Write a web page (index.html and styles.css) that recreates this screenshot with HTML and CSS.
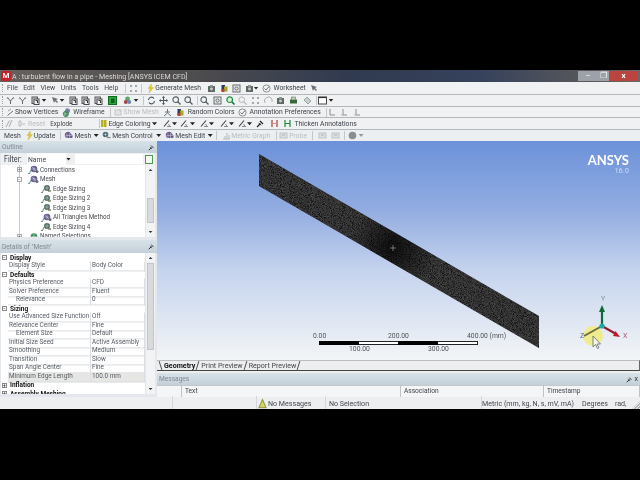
FILE: index.html
```html
<!DOCTYPE html>
<html lang="en">
<head>
<meta charset="utf-8">
<title>Meshing</title>
<link rel="stylesheet" href="styles.css">
</head>
<body>
<svg class="defs" aria-hidden="true">
  <symbol id="bolt" viewBox="0 0 9 9"><path d="M5.5 0L2 4.5h2.2L3 9l4.5-5.4H5z" fill="#e6c81e" stroke="#b8b040" stroke-width=".4"/></symbol>
  <symbol id="page" viewBox="0 0 9 9"><rect x="1" y="1" width="5.5" height="6.5" fill="#cfd2d2" stroke="#55595a"/><rect x="3" y="3" width="5" height="5.5" fill="#eee" stroke="#44484a"/><path d="M4.5 4.5h2v2.5" stroke="#333" fill="none"/></symbol>
  <symbol id="pagegreen" viewBox="0 0 9 9"><rect x=".5" y=".5" width="8" height="8" fill="#29a83c" stroke="#0e6a20"/><path d="M3 2.5h3.5v4.5H3z" fill="#0f5e1c"/></symbol>
  <symbol id="ypick" viewBox="0 0 9 9"><path d="M1.5 1.5L4.5 5l3-3.5M4.5 5v3" stroke="#666" fill="none"/><path d="M1 3l1-2M8 3L7 1" stroke="#999"/></symbol>
  <symbol id="sel" viewBox="0 0 9 9"><path d="M1 1l2 6 1-2 2 2 1-1-2-2 2-1z" fill="#6a7278"/></symbol>
  <symbol id="selgreen" viewBox="0 0 9 9"><circle cx="4.5" cy="3" r="2.4" fill="#58a868"/><circle cx="2.8" cy="6" r="2" fill="#a04848"/><circle cx="6.2" cy="6" r="2" fill="#6888b8"/></symbol>
  <symbol id="rot" viewBox="0 0 9 9"><path d="M1.5 4A3 3 0 0 1 7 2.5M7.5 5A3 3 0 0 1 2 6.5" stroke="#46505a" stroke-width="1.1" fill="none"/></symbol>
  <symbol id="pan" viewBox="0 0 9 9"><path d="M4.5 .5v8M.5 4.5h8" stroke="#50585e"/><path d="M4.5 0l-1.5 2h3zM4.5 9l-1.5-2h3zM0 4.5l2-1.5v3zM9 4.5l-2-1.5v3z" fill="#50585e"/></symbol>
  <symbol id="zoom" viewBox="0 0 9 9"><circle cx="3.7" cy="3.7" r="2.8" fill="#f0f2f2" stroke="#5a6268" stroke-width="1.1"/><path d="M5.8 5.8L8.5 8.5" stroke="#5a6268" stroke-width="1.4"/></symbol>
  <symbol id="zoomgreen" viewBox="0 0 9 9"><circle cx="3.7" cy="3.7" r="2.8" fill="#d8f0d8" stroke="#1a9040" stroke-width="1.2"/><path d="M5.8 5.8L8.5 8.5" stroke="#0e6a2c" stroke-width="1.5"/></symbol>
  <symbol id="zoompale" viewBox="0 0 9 9"><circle cx="3.7" cy="3.7" r="2.8" fill="none" stroke="#b0b8bc"/><path d="M5.8 5.8L8.5 8.5" stroke="#b0b8bc" stroke-width="1.2"/></symbol>
  <symbol id="box" viewBox="0 0 9 9"><rect x="1" y="1" width="7" height="7" fill="#e6e8e8" stroke="#666c70"/><circle cx="4.5" cy="4.5" r="1.6" fill="none" stroke="#666c70"/></symbol>
  <symbol id="dots" viewBox="0 0 9 9"><path d="M1 2h2M6 2h2M1 7h2M6 7h2M2 1v2M7 1v2M2 6v2M7 6v2" stroke="#8a9096"/></symbol>
  <symbol id="paleswirl" viewBox="0 0 9 9"><path d="M1 7A4 4 0 0 1 8 3M8 3v3" stroke="#a8b0b4" fill="none"/></symbol>
  <symbol id="cam" viewBox="0 0 9 9"><rect x="1" y="2" width="7" height="6" fill="#606a64"/><rect x="3" y="1" width="3" height="2" fill="#8a9490"/><circle cx="4.5" cy="5" r="1.4" fill="#c8d0cc"/></symbol>
  <symbol id="prn" viewBox="0 0 9 9"><rect x="1" y="3.5" width="7" height="4" fill="#386838"/><rect x="2.5" y="1" width="4" height="3" fill="#c0c8b8" stroke="#5a6a50" stroke-width=".5"/></symbol>
  <symbol id="tag" viewBox="0 0 9 9"><path d="M1 4l3-3 4 4-3 3z" fill="#c8d0cc" stroke="#9aa4a0"/></symbol>
  <symbol id="winbox" viewBox="0 0 9 9"><rect x=".5" y="1" width="8" height="7" fill="#fff" stroke="#444"/><path d="M.5 1.5h8" stroke="#333" stroke-width="1.2"/></symbol>
  <symbol id="triad1" viewBox="0 0 9 9"><path d="M2 1v6h5" stroke="#8a9298" fill="none"/><path d="M1 2h2M2 5l1 1" stroke="#b0b6ba"/></symbol>
  <symbol id="triad2" viewBox="0 0 9 9"><path d="M3 1v6h4" stroke="#8a9298" fill="none"/><path d="M1 7h2" stroke="#b0b6ba"/></symbol>
  <symbol id="vertices" viewBox="0 0 9 9"><path d="M1.5 7.5L7 3" stroke="#6c7276"/><path d="M2 3l3-2" stroke="#9aa0a4"/></symbol>
  <symbol id="wire" viewBox="0 0 9 9"><path d="M3 2.5A2.5 2.5 0 1 1 8 3 2.5 2.5 0 0 1 3 2.5z" fill="#7a7ea8"/><path d="M1 5a3 3 0 1 1 5 3 3 3 0 0 1-5-3z" fill="#3f8858"/><path d="M3 4v4M1.5 6h4" stroke="#d8e8d8" stroke-width=".5"/></symbol>
  <symbol id="palemesh" viewBox="0 0 9 9"><rect x="1" y="2" width="6" height="5" fill="#e2e4e6" stroke="#c4c8ca"/><path d="M5 1l3 3" stroke="#c4c8ca"/></symbol>
  <symbol id="person" viewBox="0 0 9 9"><path d="M4.5 1v4M1 8l3.5-3L8 8M2 4h5" stroke="#6a7a80" fill="none"/></symbol>
  <symbol id="random" viewBox="0 0 9 9"><rect x="1.5" y="1" width="3.5" height="6" fill="#2a3a70"/><rect x="4" y="2.5" width="3.5" height="5" fill="#a8a828"/><rect x="1.5" y="5" width="3" height="3" fill="#b04030"/></symbol>
  <symbol id="check" viewBox="0 0 9 9"><circle cx="4.5" cy="4.5" r="3.6" fill="#f2f4f4" stroke="#8a9094"/><path d="M2.5 4.5l1.5 1.5 3-3.5" stroke="#6a7074" fill="none"/></symbol>
  <symbol id="fan" viewBox="0 0 9 9"><path d="M7 1L4 8M4.5 1.5L1 8" stroke="#a8aeb2"/></symbol>
  <symbol id="pale2" viewBox="0 0 9 9"><path d="M2 2h2v5H2zM5 5h3" stroke="#b8bcc0" fill="none"/></symbol>
  <symbol id="yellowbars" viewBox="0 0 9 9"><path d="M1 1h2.5v7H1zM4 1h2.5v7H4z" fill="#b8b018"/></symbol>
  <symbol id="slash" viewBox="0 0 9 9"><path d="M1 7.5L6 1.5" stroke="#3c4248" stroke-width="1.1"/><path d="M4 7.5h4M5.5 5l1.5 2.5" stroke="#7a8086" stroke-width=".9" fill="none"/></symbol>
  <symbol id="pin" viewBox="0 0 9 9"><path d="M7.5 1L4.5 4.5 2 3.5l3.5 3.5-1-2.5z" fill="#222"/><path d="M1 8l3-3M4 2l3 3" stroke="#222" stroke-width="1.2"/></symbol>
  <symbol id="hred" viewBox="0 0 9 9"><path d="M2 1v7M7 1v7" stroke="#a83c3c" stroke-width="1.2"/><path d="M2 4.5h5" stroke="#c89090"/></symbol>
  <symbol id="hgreen" viewBox="0 0 9 9"><path d="M2 1v7M7 1v7" stroke="#1a8a38" stroke-width="1.2"/><path d="M2 4.5h5" stroke="#1a8a38"/></symbol>
  <symbol id="meshball" viewBox="0 0 9 9"><path d="M1 5a3 3 0 0 1 6-2 2.5 2.5 0 0 1 1 4H3a2.2 2.2 0 0 1-2-2z" fill="#6a5c88"/><path d="M3 2.5v4.5M5.5 2v5M1.5 4.5h6.5" stroke="#d8d4e4" stroke-width=".5"/></symbol>
  <symbol id="meshctl" viewBox="0 0 9 9"><circle cx="3.5" cy="3.5" r="2.8" fill="#4a6a70"/><path d="M1.5 3.5h4M3.5 1.5v4" stroke="#dde" stroke-width=".5"/><path d="M5 6.5h3.5" stroke="#7a8a78" stroke-width="1.3"/></symbol>
  <symbol id="metric" viewBox="0 0 9 9"><path d="M1 8h7M3 8V5M5 8V2M7 8V4" stroke="#b6bcc0"/></symbol>
  <symbol id="probe" viewBox="0 0 9 9"><rect x="1" y="2" width="7" height="5" fill="#dcdfe0" stroke="#c0c4c6"/><path d="M3 4h3" stroke="#b0b4b6"/></symbol>
  <symbol id="grayball" viewBox="0 0 9 9"><circle cx="4.5" cy="4.5" r="3.8" fill="#8a8e90"/></symbol>
  <symbol id="treeball" viewBox="0 0 11 9"><path d="M0 8l1.2 1L3 5" stroke="#4a7a8a" fill="none" stroke-width=".8"/><circle cx="6" cy="4" r="3.3" fill="#5e5c88"/><path d="M3.5 4h5M6 1.5v5M4 2l4 4" stroke="#e0e0ee" stroke-width=".5"/><circle cx="9" cy="6.5" r="1.5" fill="#6a6a7e"/></symbol>
  <symbol id="treeleaf" viewBox="0 0 11 9"><path d="M0 8l1.2 1L3 5" stroke="#3a7a3a" fill="none" stroke-width=".8"/><circle cx="6" cy="4" r="3" fill="#4e6a60"/><path d="M3.5 4h5M6 1.5v5" stroke="#d8e8e0" stroke-width=".5"/><path d="M7 7h3" stroke="#5a6a40" stroke-width="1.2"/></symbol>
  <symbol id="treegreen" viewBox="0 0 11 9"><circle cx="6" cy="4.5" r="3.3" fill="#3f9060"/><path d="M3.5 4.5h5M6 2v5" stroke="#e0f0e8" stroke-width=".5"/></symbol>
</svg>

<div class="band"></div>
<main class="window">
  <header class="titlebar">
    <span class="app-icon">M</span>
    <span class="title-text">A : turbulent flow in a pipe - Meshing [ANSYS ICEM CFD]</span>
    <span class="win-controls"><span class="win-btn min">–</span><span class="win-btn max">❐</span><span class="win-btn close">x</span></span>
  </header>

  <div class="bar bar-menu">
    <span class="grip"></span>
    <span class="menu first">File</span><span class="menu">Edit</span><span class="menu">View</span><span class="menu">Units</span><span class="menu">Tools</span><span class="menu">Help</span>
    <span class="sep m7"></span>
    <svg class="i m25"><use href="#dots"/></svg>
    <span class="sep m35"></span>
    <svg class="i m35"><use href="#bolt"/></svg>
    <span class="lb m05">Generate Mesh</span>
    <svg class="i m55"><use href="#cam"/></svg>
    <svg class="i m4"><use href="#random"/></svg>
    <svg class="i m3"><use href="#box"/></svg>
    <svg class="i m4"><use href="#cam"/></svg>
    <span class="arrow"></span>
    <svg class="i m3"><use href="#check"/></svg>
    <span class="lb m3">Worksheet</span>
    <svg class="i m45"><use href="#sel"/></svg>
  </div>

  <div class="bar">
    <span class="grip"></span>
    <svg class="i m15"><use href="#ypick"/></svg>
    <svg class="i m3"><use href="#ypick"/></svg>
    <svg class="i m4"><use href="#page"/></svg>
    <span class="arrow m2"></span>
    <svg class="i m4"><use href="#sel"/></svg>
    <span class="arrow"></span>
    <svg class="i m4"><use href="#page"/></svg>
    <svg class="i m3"><use href="#page"/></svg>
    <svg class="i m4"><use href="#page"/></svg>
    <svg class="i m5"><use href="#pagegreen"/></svg>
    <svg class="i m6"><use href="#selgreen"/></svg>
    <span class="arrow m2"></span>
    <span class="sep m45"></span>
    <svg class="i m25"><use href="#rot"/></svg>
    <svg class="i m3"><use href="#pan"/></svg>
    <svg class="i m4"><use href="#zoom"/></svg>
    <svg class="i m3"><use href="#zoom"/></svg>
    <span class="sep m45"></span>
    <svg class="i m15"><use href="#zoom"/></svg>
    <svg class="i m4"><use href="#box"/></svg>
    <svg class="i m4"><use href="#zoomgreen"/></svg>
    <svg class="i m3"><use href="#zoompale"/></svg>
    <svg class="i m4"><use href="#dots"/></svg>
    <svg class="i m4"><use href="#paleswirl"/></svg>
    <svg class="i m3"><use href="#cam"/></svg>
    <svg class="i m4"><use href="#prn"/></svg>
    <svg class="i m5"><use href="#tag"/></svg>
    <span class="sep m45"></span>
    <svg class="i m05"><use href="#winbox"/></svg>
    <span class="arrow m2"></span>
  </div>

  <div class="bar">
    <span class="grip"></span>
    <svg class="i m15"><use href="#vertices"/></svg>
    <span class="lb m05">Show Vertices</span>
    <svg class="i m35"><use href="#wire"/></svg>
    <span class="lb m25">Wireframe</span>
    <span class="sep m5"></span>
    <svg class="i m35"><use href="#palemesh"/></svg>
    <span class="lb off m05">Show Mesh</span>
    <svg class="i m45"><use href="#person"/></svg>
    <svg class="i m4"><use href="#random"/></svg>
    <span class="lb m25">Random Colors</span>
    <svg class="i m35"><use href="#check"/></svg>
    <span class="lb m25">Annotation Preferences</span>
    <span class="sep m5"></span>
    <svg class="i m15"><use href="#triad1"/></svg>
    <svg class="i m3"><use href="#triad2"/></svg>
    <svg class="i m4"><use href="#triad2"/></svg>
  </div>

  <div class="bar">
    <span class="grip"></span>
    <svg class="i m05"><use href="#fan"/></svg>
    <svg class="i m3"><use href="#pale2"/></svg>
    <span class="lb off m25">Reset</span>
    <span class="lb small m5">Explode</span>
    <span class="sep m27"></span>
    <svg class="i m0"><use href="#yellowbars"/></svg>
    <span class="lb mn1">Edge Coloring</span>
    <span class="arrow m15"></span>
    <svg class="i m6"><use href="#slash"/></svg>
    <span class="arrow"></span>
    <svg class="i m3"><use href="#slash"/></svg>
    <span class="arrow m1"></span>
    <svg class="i m5"><use href="#slash"/></svg>
    <span class="arrow"></span>
    <svg class="i m6"><use href="#slash"/></svg>
    <span class="arrow"></span>
    <svg class="i m4"><use href="#slash"/></svg>
    <span class="arrow"></span>
    <svg class="i m4"><use href="#pin"/></svg>
    <svg class="i m5"><use href="#hred"/></svg>
    <svg class="i m4"><use href="#hgreen"/></svg>
    <span class="lb m25">Thicken Annotations</span>
  </div>

  <div class="bar bar-last">
    <span class="lb m2">Mesh</span>
    <svg class="i m45"><use href="#bolt"/></svg>
    <span class="lb mn05">Update</span>
    <span class="sep m5"></span>
    <svg class="i m25"><use href="#meshball"/></svg>
    <span class="lb m15">Mesh</span>
    <span class="arrow m25"></span>
    <svg class="i m3"><use href="#meshctl"/></svg>
    <span class="lb m15">Mesh Control</span>
    <span class="arrow m35"></span>
    <svg class="i m4"><use href="#meshball"/></svg>
    <span class="lb m1">Mesh Edit</span>
    <span class="arrow m25"></span>
    <span class="sep m35"></span>
    <svg class="i m45"><use href="#metric"/></svg>
    <span class="lb off m05">Metric Graph</span>
    <span class="sep m6"></span>
    <svg class="i m15"><use href="#probe"/></svg>
    <span class="lb off m15">Probe</span>
    <span class="sep m5"></span>
    <svg class="i m45"><use href="#probe"/></svg>
    <svg class="i m4"><use href="#probe"/></svg>
    <span class="sep m45"></span>
    <svg class="i m3"><use href="#grayball"/></svg>
    <span class="arrow off-arrow m15"></span>
  </div>

  <div class="workspace">
    <aside class="side">
      <div class="pane-head"><span>Outline</span><svg class="pin"><use href="#pin"/></svg></div>
      <div class="outline">
        <div class="filter">
          <span class="filter-label">Filter:</span>
          <span class="filter-name">Name</span>
          <span class="arrow filter-arrow"></span>
          <span class="filter-input"></span>
          <span class="filter-btn"></span>
        </div>
        <div class="tree-wrap">
          <ul class="tree">
            <li class="l1"><span class="exp">+</span><svg class="ti"><use href="#treeball"/></svg><span class="tt">Connections</span></li>
            <li class="l1"><span class="exp">−</span><svg class="ti"><use href="#treeball"/></svg><span class="tt">Mesh</span></li>
            <li class="l2"><svg class="ti"><use href="#treeleaf"/></svg><span class="tt">Edge Sizing</span></li>
            <li class="l2"><svg class="ti"><use href="#treeleaf"/></svg><span class="tt">Edge Sizing 2</span></li>
            <li class="l2"><svg class="ti"><use href="#treeleaf"/></svg><span class="tt">Edge Sizing 3</span></li>
            <li class="l2"><svg class="ti"><use href="#treeball"/></svg><span class="tt">All Triangles Method</span></li>
            <li class="l2"><svg class="ti"><use href="#treeleaf"/></svg><span class="tt">Edge Sizing 4</span></li>
            <li class="l1"><span class="exp">+</span><svg class="ti"><use href="#treegreen"/></svg><span class="tt">Named Selections</span></li>
          </ul>
          <div class="scroll tree-scroll"><span class="thumb"></span></div>
        </div>
      </div>
      <div class="pane-head details-head"><span>Details of "Mesh"</span><svg class="pin"><use href="#pin"/></svg></div>
      <div class="details">
        <div class="grid">
          <div class="g-head"><span class="box">−</span><span class="gt">Display</span></div>
          <div class="g-row"><span>Display Style</span><span>Body Color</span></div>
          <div class="g-head"><span class="box">−</span><span class="gt">Defaults</span></div>
          <div class="g-row"><span>Physics Preference</span><span>CFD</span></div>
          <div class="g-row"><span>Solver Preference</span><span>Fluent</span></div>
          <div class="g-row"><span class="ind">Relevance</span><span>0</span></div>
          <div class="g-head"><span class="box">−</span><span class="gt">Sizing</span></div>
          <div class="g-row"><span>Use Advanced Size Function</span><span>Off</span></div>
          <div class="g-row"><span>Relevance Center</span><span>Fine</span></div>
          <div class="g-row"><span class="ind">Element Size</span><span>Default</span></div>
          <div class="g-row"><span>Initial Size Seed</span><span>Active Assembly</span></div>
          <div class="g-row"><span>Smoothing</span><span>Medium</span></div>
          <div class="g-row"><span>Transition</span><span>Slow</span></div>
          <div class="g-row"><span>Span Angle Center</span><span>Fine</span></div>
          <div class="g-row sel"><span>Minimum Edge Length</span><span>100.0 mm</span></div>
          <div class="g-head"><span class="box">+</span><span class="gt">Inflation</span></div>
          <div class="g-head"><span class="box">+</span><span class="gt">Assembly Meshing</span></div>
        </div>
        <div class="scroll details-scroll"><span class="thumb"></span></div>
      </div>
    </aside>

    <section class="main">
      <div class="viewport">
        <svg class="scene" viewBox="0 0 483 219" aria-hidden="true">
          <defs>
            <linearGradient id="sky" x1="0" y1="0" x2="0" y2="1">
              <stop offset="0" stop-color="#6c92da"/>
              <stop offset=".3" stop-color="#90abe0"/>
              <stop offset=".6" stop-color="#c6d4ee"/>
              <stop offset="1" stop-color="#f3f5f6"/>
            </linearGradient>
            <radialGradient id="blob" gradientUnits="userSpaceOnUse" cx="236" cy="107" r="45">
              <stop offset="0" stop-color="#000" stop-opacity=".75"/>
              <stop offset="1" stop-color="#000" stop-opacity="0"/>
            </radialGradient>
            <filter id="speck" x="0" y="0" width="100%" height="100%">
              <feTurbulence type="fractalNoise" baseFrequency="1.1" numOctaves="2" seed="4" result="n"/>
              <feColorMatrix in="n" type="matrix" values="0 0 0 0 .14  0 0 0 0 .14  0 0 0 0 .14  .9 0 0 0 -.25" result="d"/>
              <feComposite in="d" in2="SourceAlpha" operator="in" result="c"/>
              <feMerge><feMergeNode in="SourceGraphic"/><feMergeNode in="c"/></feMerge>
            </filter>
          </defs>
          <rect width="483" height="219" fill="url(#sky)"/>
          <polygon points="102,13 382,175 382,207 102,45" fill="#131416" filter="url(#speck)"/>
          <polygon points="102,13 382,175 382,207 102,45" fill="url(#blob)"/>
          <path d="M236 104v6M233 107h6" stroke="#8a8a8a" stroke-width=".8"/>
          <rect x="162.5" y="200.5" width="158" height="3" fill="#fff" stroke="#222"/>
          <rect x="162" y="200" width="40" height="4" fill="#000"/>
          <rect x="241" y="200" width="40" height="4" fill="#000"/>
          <circle cx="436" cy="195" r="10" fill="#efec90"/>
          <path d="M445 185V170" stroke="#0c6a36" stroke-width="2.2"/>
          <path d="M445 164l-3 7h6z" fill="#0c6a36"/>
          <path d="M445 185l14 8" stroke="#981c30" stroke-width="2.2"/>
          <path d="M463 196l-7-1 2.5-5z" fill="#c01c28"/>
          <path d="M445 185l-18 10" stroke="#6c6c3c" stroke-width="2"/>
          <circle cx="445" cy="185" r="2.6" fill="#1aa8a8"/>
          <path d="M436 195v11l2.5-2.5 2 4 1.5-.8-2-3.7h3.5z" fill="#f4f4f4" stroke="#666" stroke-width=".8"/>
        </svg>
        <div class="logo"><span class="logo-name">ANSYS</span><span class="logo-ver">16.0</span></div>
        <span class="scale s0">0.00</span>
        <span class="scale s200">200.00</span>
        <span class="scale s400">400.00 (mm)</span>
        <span class="scale s100">100.00</span>
        <span class="scale s300">300.00</span>
        <span class="axis ax-y">Y</span>
        <span class="axis ax-x">X</span>
        <span class="axis ax-z">Z</span>
      </div>
      <div class="tabs">
        <span class="tab active"><span class="tt">Geometry</span></span><span class="tab"><span class="tt">Print Preview</span></span><span class="tab"><span class="tt">Report Preview</span></span>
      </div>
      <div class="messages">
        <div class="pane-head msg-head"><span>Messages</span><span class="msg-ctrl"><svg class="pin"><use href="#pin"/></svg>x</span></div>
        <div class="msg-cols"><span class="c0"></span><span class="c1">Text</span><span class="c2">Association</span><span class="c3">Timestamp</span></div>
      </div>
    </section>
  </div>

  <footer class="status">
    <span class="st st-a"></span>
    <span class="st st-b"></span>
    <span class="st st-c"><svg class="warn" viewBox="0 0 10 10"><path d="M5 1L1 9h8z" fill="#e0d060" stroke="#7a9a40"/></svg>No Messages</span>
    <span class="st st-d">No Selection</span>
    <span class="st st-e">Metric (mm, kg, N, s, mV, mA)</span>
    <span class="st st-f">Degrees</span>
    <span class="st st-g">rad,</span>
    <span class="size-grip"></span>
  </footer>
</main>
<div class="band rest"></div>
</body>
</html>
```

FILE: styles.css
```css
* { box-sizing: border-box; }
html, body { margin: 0; padding: 0; }
body {
  width: 640px; height: 480px; overflow: hidden; background: #000;
  font-family: Roboto, "Liberation Sans", sans-serif;
  font-size: 6.8px; color: #3e444b;
  display: flex; flex-direction: column;
}
.defs { position: absolute; width: 0; height: 0; }
.band { height: 70px; background: #000; flex: none; }
.band.rest { height: 71px; }
.window { height: 339px; flex: none; display: flex; flex-direction: column; background: #eceef0; overflow: hidden; filter: blur(.35px); }

/* the source video squeezed the text sideways: small font, stretched back up */
.title-text, .menu, .lb, .tt, .filter-label, .filter-name, .pane-head > span:first-child, .msg-cols span, .st { transform: scaleY(1.14); }
.g-row span, .gt { transform: scaleY(1.1); }

.titlebar { height: 12px; flex: none; display: flex; align-items: center; background: linear-gradient(90deg,#65615e 0,#504e4e 28%,#303a50 55%,#36425c 75%,#58585a 92%,#6a6a6c 100%); font-size: 7.1px; }
.app-icon { width: 10px; height: 10px; margin-left: 1px; background: #c4202c; color: #fff; border-radius: 2px; font-size: 8px; font-weight: bold; line-height: 10px; text-align: center; }
.title-text { margin-left: 1px; color: #d8d8d8; }
.win-controls { margin-left: auto; display: flex; height: 10px; margin-right: 2px; align-self: flex-start; margin-top: 1px; }
.win-btn { height: 10px; text-align: center; background: #9ca2a8; color: #fff; line-height: 10px; font-size: 8px; }
.win-btn.min { width: 20px; }
.win-btn.max { width: 11px; }
.win-btn.close { width: 29px; background: #bc443e; font-weight: bold; }

.bar { height: 11.7px; flex: none; display: flex; align-items: center; border-bottom: 1px solid #b4b7b9; background: #f0f1f2; padding-left: 2px; white-space: nowrap; overflow: hidden; }
.bar-menu { height: 13px; }
.bar-last { height: 11px; border-bottom: 0; background: #eceff2; }
.grip { width: 2px; height: 8px; border-left: 1px dotted #a0a0a0; flex: none; }
.menu { margin-left: 5.5px; font-size: 6.86px; color: #43484e; }
.menu.first { margin-left: 3px; }
.sep { width: 1px; height: 9px; background: #c4c6c8; flex: none; }
.i { width: 9px; height: 9px; flex: none; }
.lb { color: #3e444b; font-size: 6.8px; }
.lb.off { color: #babdc0; }
.lb.small { font-size: 6.3px; }
.arrow { width: 5px; height: 3px; flex: none; background: #222; clip-path: polygon(0 0,100% 0,50% 100%); }
.off-arrow { background: #999; }

.mn1 { margin-left: -1px; }
.mn05 { margin-left: -.5px; }
.m0 { margin-left: 0; }
.m05 { margin-left: .5px; }
.m1 { margin-left: 1px; }
.m15 { margin-left: 1.5px; }
.m2 { margin-left: 2px; }
.m25 { margin-left: 2.5px; }
.m3 { margin-left: 3px; }
.m35 { margin-left: 3.5px; }
.m4 { margin-left: 4px; }
.m45 { margin-left: 4.5px; }
.m5 { margin-left: 5px; }
.m55 { margin-left: 5.5px; }
.m6 { margin-left: 6px; }
.m7 { margin-left: 7px; }
.m27 { margin-left: 27px; }

.workspace { flex: 1; min-height: 0; display: flex; }
.side { width: 157px; flex: none; display: flex; flex-direction: column; background: #e4e8ec; }
.pane-head { height: 12px; flex: none; display: flex; justify-content: space-between; align-items: center; padding: 0 2px; font-size: 6.6px; color: #7f8890; background: linear-gradient(#d8e2e8,#c4d0d9); }
.pin { width: 7px; height: 7px; }
.outline { height: 84px; flex: none; margin: 0 2px 0 1px; background: #fff; display: flex; flex-direction: column; overflow: hidden; }
.filter { height: 12px; flex: none; display: flex; align-items: center; background: #eef0f2; font-size: 7.2px; }
.filter-label { width: 26px; padding-left: 3px; }
.filter-name { width: 39px; padding-left: 1px; background: #fff; height: 10px; line-height: 12px; font-size: 6.8px; }
.filter-arrow { margin-left: 0; margin-right: 4px; }
.filter-input { flex: 1; background: #fff; height: 10px; }
.filter-btn { width: 8px; height: 9px; border: 1px solid #4a9a50; background: #f4f8f0; margin: 0 2px 0 2px; }
.tree-wrap { flex: 1; min-height: 0; display: flex; overflow: hidden; }
.tree { list-style: none; margin: 0; padding: 0; flex: 1; overflow: hidden; background: linear-gradient(#c8cacc,#c8cacc) 18px 0 / 1px 100% no-repeat; }
.tree li { height: 9.5px; display: flex; align-items: center; font-size: 6.25px; white-space: nowrap; color: #46494e; }
.tree li.l1 { padding-left: 16px; }
.tree li.l2 { padding-left: 40px; }
.ti { width: 11px; height: 9px; flex: none; margin-right: 1px; }
.tree li.l1 .ti { margin-left: 2px; }
.exp { width: 5px; height: 5px; border: 1px solid #aaa; background: #fff; font-size: 5px; line-height: 3px; text-align: center; flex: none; margin-right: 4px; }
.scroll { width: 10px; flex: none; background: #f2f3f4; display: flex; border-left: 1px solid #e4e6e8; position: relative; }
.scroll::before, .scroll::after { content: ""; position: absolute; left: 2.5px; width: 4px; height: 2px; background: #333; }
.scroll::before { top: 4px; clip-path: polygon(50% 0,100% 100%,0 100%); }
.scroll::after { bottom: 4px; clip-path: polygon(0 0,100% 0,50% 100%); }
.thumb { position: absolute; left: 1px; right: 1px; background: #d8dadc; border: 1px solid #c2c4c6; }
.tree-scroll .thumb { top: 33px; height: 25px; }
.details-head { height: 13px; margin-top: 3px; }
.details { height: 141px; flex: none; margin: 0 2px 0 1px; display: flex; background: #fff; overflow: hidden; }
.grid { flex: 1; min-width: 0; overflow: hidden; font-size: 6.4px; color: #575c63; padding-top: .5px; }
.g-head { height: 8.5px; font-weight: bold; color: #111; display: flex; align-items: center; padding-left: 1px; font-size: 6.5px; }
.box { width: 5px; height: 5px; border: 1px solid #888; font-size: 5px; line-height: 3px; text-align: center; margin-right: 3px; flex: none; font-weight: normal; }
.g-row { height: 8.5px; display: grid; grid-template-columns: 83px 1fr; margin-left: 7px; }
.g-row span { line-height: 7.5px; border-bottom: 1px solid #dcdfe1; border-right: 1px solid #dcdfe1; padding-left: 1px; white-space: nowrap; overflow: hidden; }
.g-row .ind { padding-left: 8px; }
.g-row.sel span { background: #e6e6e4; }
.details-scroll .thumb { top: 10px; height: 87px; }

.main { flex: 1; min-width: 0; display: flex; flex-direction: column; }
.viewport { height: 219px; flex: none; position: relative; overflow: hidden; }
.scene { display: block; width: 483px; height: 219px; }
.logo { position: absolute; top: 12px; right: 11px; display: flex; flex-direction: column; align-items: flex-end; }
.logo-name { font-family: Lato, sans-serif; font-size: 13px; line-height: 14px; font-weight: bold; color: #fff; }
.logo-ver { font-size: 7.5px; line-height: 8px; color: #cfd9ee; }
.scale { position: absolute; font-size: 6.8px; color: #50545a; white-space: nowrap; }
.s0 { left: 156px; top: 191px; }
.s200 { left: 231px; top: 191px; }
.s400 { left: 310px; top: 191px; }
.s100 { left: 192px; top: 204px; }
.s300 { left: 271px; top: 204px; }
.axis { position: absolute; font-size: 7px; }
.ax-y { left: 444px; top: 154px; color: #7a9a90; }
.ax-x { left: 466px; top: 191px; color: #a85868; }
.ax-z { left: 423px; top: 191px; color: #5a6488; }

.tabs { height: 11px; flex: none; display: flex; align-items: flex-end; padding-left: 6px; border-top: 1px solid #bbbdbf; border-bottom: 1px solid #444; border-right: 1px solid #666; background: #eceef0; font-size: 7.1px; position: relative; }
.tab { padding: 0 2px 0 1px; margin-right: 3px; height: 9px; line-height: 9px; color: #444; position: relative; display: flex; }
.tab::after { content: ""; position: absolute; top: 0; bottom: 0; right: -1px; width: 1px; background: #555; transform: rotate(18deg); }
.tab.active { font-weight: bold; color: #111; }
.tab.active::before { content: ""; position: absolute; top: 0; bottom: 0; left: -3px; width: 1px; background: #555; transform: rotate(-18deg); }
.messages { flex: 1; min-height: 0; margin-top: 2px; display: flex; flex-direction: column; background: #fff; }
.msg-ctrl { display: flex; gap: 2px; align-items: center; color: #333; font-size: 7px; }
.msg-cols { flex: 1; display: flex; font-size: 6.6px; line-height: 11px; background: #f4f5f6; border-top: 1px solid #c6c8ca; }
.msg-cols span { border-right: 1px solid #c0c2c4; padding-left: 3px; }
.c0 { width: 25px; }
.c1 { width: 219px; }
.c2 { width: 143px; }
.c3 { flex: 1; }

.status { height: 12px; flex: none; display: flex; align-items: center; background: #eceef0; font-size: 7.1px; color: #43484e; position: relative; }
.st { height: 12px; border-right: 1px solid #d4d6d8; white-space: nowrap; display: flex; align-items: center; flex: none; }
.st-a { width: 173px; }
.st-b { width: 84px; }
.st-c { width: 69px; padding-left: 1px; }
.warn { width: 9px; height: 9px; margin-right: 1px; flex: none; }
.st-d { width: 156px; padding-left: 3px; }
.st-e { width: 100px; border-right: 0; }
.st-f { width: 33px; border-right: 0; }
.st-g { border-right: 0; }
.size-grip { position: absolute; right: 0; bottom: 0; width: 8px; height: 8px; background: repeating-linear-gradient(135deg,transparent 0 1px,#b0b2b4 1px 2px); clip-path: polygon(100% 0,100% 100%,0 100%); }
```
